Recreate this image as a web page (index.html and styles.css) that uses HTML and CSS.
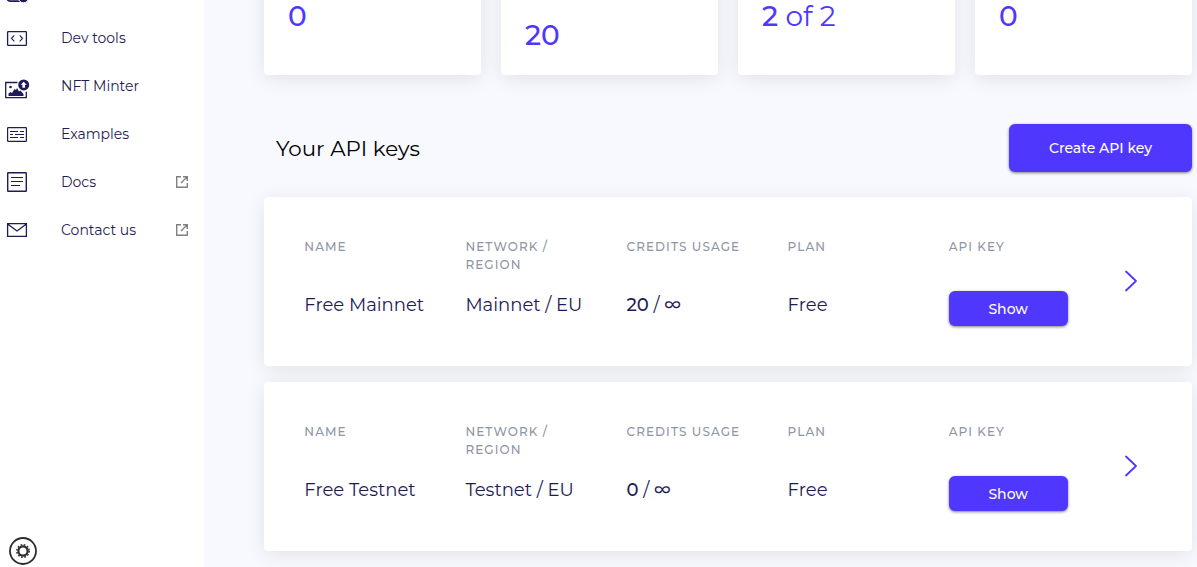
FILE: index.html
```html
<!DOCTYPE html>
<html lang="en">
<head>
<meta charset="utf-8">
<title>API keys</title>
<link rel="stylesheet" href="styles.css">
</head>
<body>
<div class="app">
  <aside class="sidebar">
    <nav class="nav">
      <a class="item"><svg class="icon" viewBox="0 0 30 30"><rect x="6.700" y="10" width="16" height="16.200" rx="4" fill="none" stroke="#1f1b56" stroke-width="1.700"/><circle cx="23.500" cy="22.500" r="5.300" fill="#1f1b56" stroke="#fff"/></svg></a>
      <a class="item"><svg class="icon" viewBox="0 0 30 30"><g fill="none" stroke="#1f1b56" stroke-width="1.300"><rect x="7.600" y="8.600" width="18.800" height="13.800" rx=".6"/><path d="M14.300 12.300l-2.800 3 2.800 3M19.700 12.300l2.800 3-2.800 3" stroke-width="1.100"/></g></svg><span class="name">Dev tools</span></a>
      <a class="item"><svg class="icon" viewBox="0 0 30 30"><path d="M17.500 11.500H5.700v15.200h20.600v-6" fill="none" stroke="#1f1b56" stroke-width="1.300"/><path d="M8.500 25v-2.500l2-1.500 1.500 1 2.500-4 1.500 1 1-2 2 3.500 1.500-1 3 3.500v2z" fill="#1f1b56"/><circle cx="10.500" cy="16" r="1.300" fill="#1f1b56"/><circle cx="23.700" cy="13.900" r="5.500" fill="#1f1b56"/><path d="M23.700 10.700l3 3h-1.700v3h-2.600v-3h-1.700z" fill="#fff"/></svg><span class="name">NFT Minter</span></a>
      <a class="item"><svg class="icon" viewBox="0 0 30 30"><g fill="none" stroke="#1f1b56" stroke-width="1.200"><rect x="7.600" y="8.600" width="18.800" height="13.800" rx=".6"/><path d="M10 12.500h8m2 0h4M10 15.500h3m2 0h9M10 18.500h8m2 0h4" stroke-width="1"/></g></svg><span class="name">Examples</span></a>
      <a class="item"><svg class="icon" viewBox="0 0 30 30"><g fill="none" stroke="#1f1b56" stroke-width="1.400"><rect x="7.700" y="5.700" width="18.600" height="18.600" rx=".6"/><path d="M11 10.500h12M11 14.500h12M11 18.500h9" stroke-width="1.100"/></g></svg><span class="name">Docs</span><svg class="ext" viewBox="0 0 14 14"><path d="M6 1.700H1.700v10.600h10.600V8M8 1.700h4.300V6M12 2L6 8" fill="none" stroke="#808080" stroke-width="1.400"/></svg></a>
      <a class="item"><svg class="icon" viewBox="0 0 30 30"><path d="M7.600 8.600h18.800v12.800H7.600zM7.600 9l9.400 7 9.400-7" fill="none" stroke="#1f1b56" stroke-width="1.300"/></svg><span class="name">Contact us</span><svg class="ext" viewBox="0 0 14 14"><path d="M6 1.700H1.700v10.600h10.600V8M8 1.700h4.300V6M12 2L6 8" fill="none" stroke="#808080" stroke-width="1.400"/></svg></a>
    </nav>
    <svg class="gear" viewBox="0 0 30 30"><circle cx="15" cy="15" r="13" fill="none" stroke="#2d2d2d" stroke-width="1.800"/><circle cx="15" cy="15" r="4.600" fill="none" stroke="#2d2d2d" stroke-width="2.200"/><circle cx="15" cy="15" r="6.200" fill="none" stroke="#2d2d2d" stroke-width="1.500" stroke-dasharray="1.700 1.546"/></svg>
  </aside>
  <main class="main">
    <section class="stats">
      <div class="stat"><b>0</b></div>
      <div class="stat low"><b>20</b></div>
      <div class="stat"><b>2</b> of 2</div>
      <div class="stat"><b>0</b></div>
    </section>
    <header class="head"><h2 class="title">Your API keys</h2><button class="btn create">Create API key</button></header>
    <section class="keys">
      <article class="key">
        <div class="col"><div class="label">NAME</div><div class="value">Free Mainnet</div></div>
        <div class="col"><div class="label">NETWORK /<br>REGION</div><div class="value">Mainnet / EU</div></div>
        <div class="col"><div class="label">CREDITS USAGE</div><div class="value"><b>20</b> / <b>∞</b></div></div>
        <div class="col"><div class="label">PLAN</div><div class="value">Free</div></div>
        <div class="col"><div class="label">API KEY</div><button class="btn show">Show</button></div>
        <svg class="chev" viewBox="0 0 14 22"><path d="M2 1.500l10 9.500-10 9.500"/></svg>
      </article>
      <article class="key">
        <div class="col"><div class="label">NAME</div><div class="value">Free Testnet</div></div>
        <div class="col"><div class="label">NETWORK /<br>REGION</div><div class="value">Testnet / EU</div></div>
        <div class="col"><div class="label">CREDITS USAGE</div><div class="value"><b>0</b> / <b>∞</b></div></div>
        <div class="col"><div class="label">PLAN</div><div class="value">Free</div></div>
        <div class="col"><div class="label">API KEY</div><button class="btn show">Show</button></div>
        <svg class="chev" viewBox="0 0 14 22"><path d="M2 1.500l10 9.500-10 9.500"/></svg>
      </article>
    </section>
  </main>
</div>
</body>
</html>
```
FILE: styles.css
```css
* { box-sizing: border-box; }
body { margin: 0; font-family: Montserrat, Inter, "Open Sans", sans-serif; background: #f8f9ff; color: #1f1b56; }
.app { display: flex; height: 567px; overflow: hidden; }
.sidebar { width: 204px; flex: none; background: #fff; display: flex; flex-direction: column; justify-content: space-between; }
.nav { margin-top: -34px; }
.item { display: flex; align-items: center; height: 48px; font-size: 14px; }
.icon { width: 30px; height: 30px; flex: none; }
.name { margin-left: 31px; }
.ext { width: 14px; height: 14px; margin-left: auto; margin-right: 15px; }
.gear { width: 30px; height: 30px; margin: 0 0 1px 8px; }
.main { flex: 1; padding: 0 5px 0 60px; }
.stats { display: grid; grid-template-columns: repeat(4, 217px); gap: 20px; margin-top: -75px; height: 150px; }
.stat { background: #fff; border-radius: 4px; box-shadow: 0 4px 20px rgba(0,0,0,.09); padding: 74px 24px 0; font-size: 28px; line-height: 34px; color: #4f37fd; font-weight: 400; }
.stat b { font-weight: 500; }
.low { padding-top: 93px; }
.head { display: flex; justify-content: space-between; align-items: center; height: 48px; margin: 49px 0 25px; padding-left: 12px; }
.title { margin: 0; font-size: 21.400px; font-weight: 400; color: #000; }
.btn { border: 0; padding: 0; border-radius: 6px; background: #4f37fd; color: #fff; font: 500 14px Montserrat, Inter, sans-serif; box-shadow: 0 1px 3px rgba(0,0,0,.5); }
.create { width: 183px; height: 48px; }
.show { width: 119px; height: 35px; display: block; }
.keys { display: flex; flex-direction: column; gap: 16px; }
.key { display: grid; grid-template-columns: repeat(5, 161.100px) 1fr; height: 169px; padding: 41px 0 0 40.300px; background: #fff; border-radius: 4px; box-shadow: 0 4px 20px rgba(0,0,0,.09); }
.label { height: 53px; font-size: 12px; line-height: 18px; letter-spacing: 1.100px; font-weight: 500; color: #8e96a5; }
.value { padding-top: 1px; font-size: 18px; line-height: 27px; white-space: nowrap; }
.value b { font-weight: 500; }
.chev { width: 14px; height: 22px; margin: 32px 0 0 14px; fill: none; stroke: #4f37fd; stroke-width: 1.800; stroke-linecap: round; stroke-linejoin: round; }
```
